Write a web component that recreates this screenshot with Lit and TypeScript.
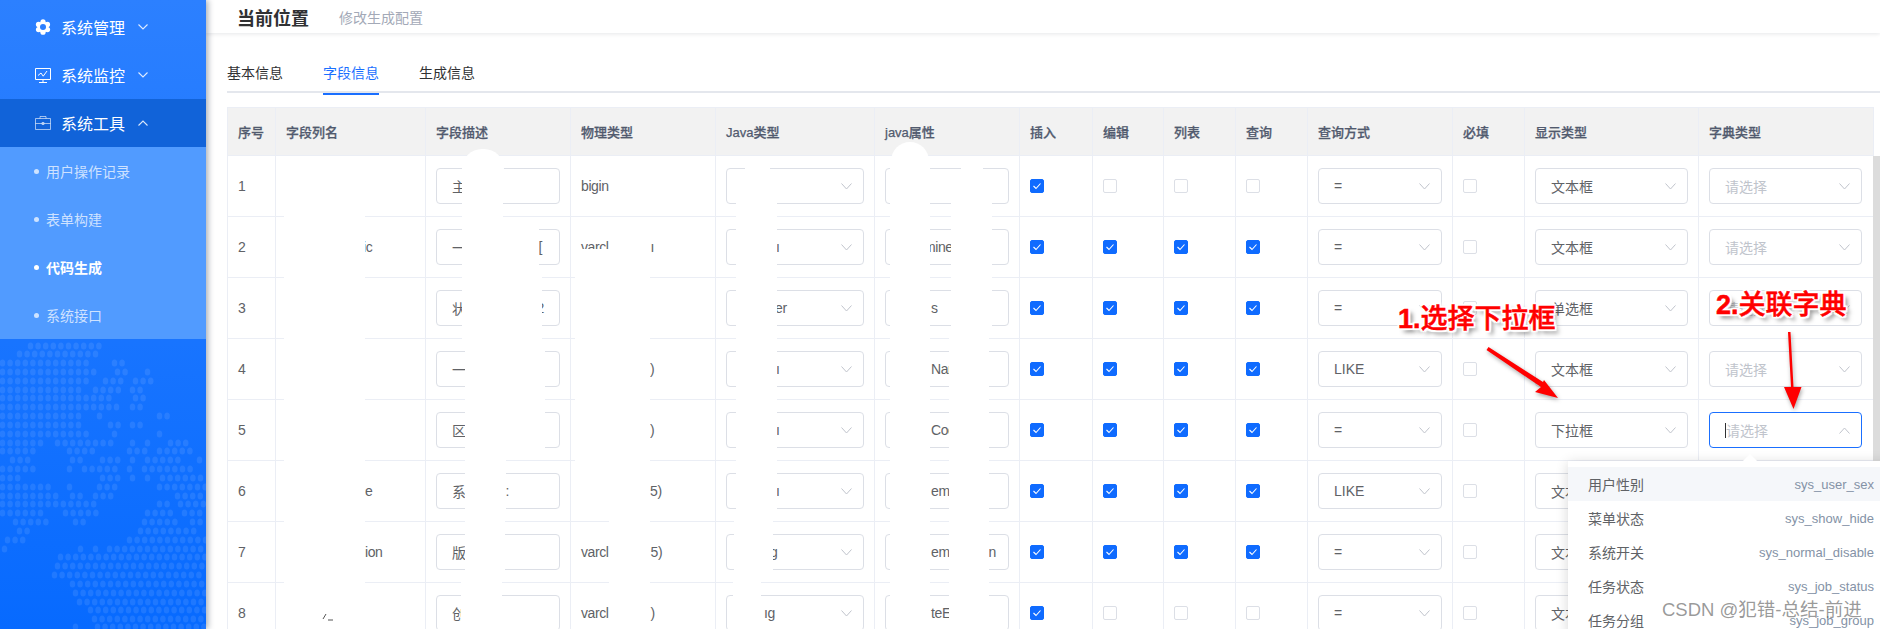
import { html, css, svg, LitElement } from "lit";
import { customElement } from "lit/decorators.js";

// a fragment list: strings are visible text, numbers are blank space (px) left by the paint-over
type Frag = (string | number)[];

interface Row {
	no: number;
	name: Frag;
	desc: Frag;
	type: Frag;
	java: Frag;
	attr: Frag;
	checks: boolean[];
	query: string;
	show: string;
}

const ALL = [true, true, true, true];
const ONLY_FIRST = [true, false, false, false];

const ROWS: Row[] = [
	{ no: 1, name: [], desc: ["主"], type: ["bigin"], java: [], attr: [], checks: ONLY_FIRST, query: "=", show: "文本框" },
	{ no: 2, name: [77, "ic"], desc: ["一", 73, "["], type: ["varcl", 42, "ı"], java: [34, "ı"], attr: [23, "mine"], checks: ALL, query: "=", show: "文本框" },
	{ no: 3, name: [], desc: ["状", 71, "2"], type: [], java: [33, "er"], attr: [30, "s"], checks: ALL, query: "=", show: "单选框" },
	{ no: 4, name: [], desc: ["一"], type: [69, ")"], java: [34, "ı"], attr: [30, "Nar"], checks: ALL, query: "LIKE", show: "文本框" },
	{ no: 5, name: [], desc: ["区"], type: [69, ")"], java: [34, "ı"], attr: [30, "Coo"], checks: ALL, query: "=", show: "下拉框" },
	{ no: 6, name: [79, "e"], desc: ["系", 40, ":"], type: [69, "5)"], java: [34, "ı"], attr: [30, "emI"], checks: ALL, query: "LIKE", show: "文本框" },
	{ no: 7, name: [79, "ion"], desc: ["版"], type: ["varcl", 42, "5)"], java: [28, "g"], attr: [30, "emV", 30, "n"], checks: ALL, query: "=", show: "文本框" },
	{ no: 8, name: [], desc: ["创"], type: ["varcl", 42, ")"], java: [22, "ıg"], attr: [30, "teE"], checks: ONLY_FIRST, query: "=", show: "文本框" },
];

const HEADERS = ["序号", "字段列名", "字段描述", "物理类型", "Java类型", "java属性", "插入", "编辑", "列表", "查询", "查询方式", "必填", "显示类型", "字典类型"];

const DICTS = [
	["用户性别", "sys_user_sex"],
	["菜单状态", "sys_show_hide"],
	["系统开关", "sys_normal_disable"],
	["任务状态", "sys_job_status"],
	["任务分组", "sys_job_group"],
];

// white paint-over blocks on the screenshot: x, y, w, h, corner radius
const PATCHES = [
	[284, 156, 81, 473, 0],
	[462, 149, 42, 40, 20],
	[462, 165, 41, 52, 0],
	[462, 217, 77, 60, 0],
	[462, 277, 80, 62, 0],
	[465, 339, 80, 121, 0],
	[465, 460, 41, 61, 0],
	[465, 521, 40, 61, 0],
	[461, 582, 41, 47, 0],
	[610, 217, 41, 32, 0],
	[575, 249, 75, 272, 0],
	[609, 521, 41, 108, 0],
	[745, 165, 25, 20, 0],
	[736, 185, 41, 336, 0],
	[734, 521, 39, 61, 0],
	[733, 582, 28, 47, 0],
	[891, 142, 38, 40, 19],
	[890, 160, 40, 469, 0],
	[961, 165, 22, 20, 0],
	[951, 185, 41, 153, 0],
	[949, 338, 40, 291, 0],
];

// runs of map dots per row of the sidebar background: y, then x start/end pairs
const MAP: number[][] = [
	[7, 28, 100],
	[15, 17, 97],
	[24, 0, 93, 112, 123],
	[33, 0, 97, 115, 127, 145, 148],
	[42, 0, 93, 103, 123, 133, 153],
	[51, 0, 82, 93, 120, 130, 142],
	[59, 0, 115, 133, 145],
	[68, 0, 118, 130, 142],
	[77, 0, 85, 97, 100, 157, 168],
	[86, 0, 82, 108, 120, 130, 142],
	[95, 0, 93, 112, 115, 157, 160],
	[104, 0, 43, 55, 118, 130, 133, 145, 148, 168, 193],
	[112, 0, 33, 67, 93, 127, 145, 157, 193],
	[121, 10, 30, 70, 82, 100, 120, 130, 133, 145, 180, 197, 203],
	[130, 0, 33, 67, 70, 82, 115, 127, 130, 142, 192],
	[139, 0, 22, 100, 118, 130, 133, 145, 148, 160, 206],
	[148, 0, 55, 67, 70, 97, 115, 157, 206],
	[157, 0, 58, 70, 82, 93, 112, 175, 206],
	[165, 0, 100, 157, 168, 178, 206],
	[174, 0, 43, 63, 97, 145, 172, 182, 206],
	[183, 13, 47, 73, 85, 142, 175, 190, 206],
	[192, 17, 28, 138, 195],
	[201, 5, 25, 127, 206],
	[210, 2, 7, 78, 82, 93, 97, 107, 206],
	[218, 58, 206],
	[227, 55, 206],
	[236, 52, 206],
	[245, 70, 206],
	[254, 73, 206],
	[263, 77, 206],
	[271, 88, 206],
	[280, 92, 206],
	[288, 73, 77, 95, 206],
];

@customElement("app-root")
export class AppRoot extends LitElement {
	static styles = css`
		:host {
			display: block;
			position: relative;
			height: 629px;
			overflow: hidden;
			background: #fff;
			color: #606266;
			font-family: "Liberation Sans", "Noto Sans CJK SC", sans-serif;
			font-size: 14px;
		}
		.page {
			display: flex;
			height: 629px;
		}

		.side {
			flex: none;
			display: flex;
			flex-direction: column;
			width: 206px;
			padding-top: 3px;
			box-sizing: border-box;
			background: linear-gradient(#2c80ff, #076aff);
			box-shadow: 2px 0 6px rgba(0, 21, 41, 0.35);
			z-index: 1;
		}
		.menu {
			display: flex;
			align-items: center;
			height: 48px;
			padding-left: 35px;
			color: #fff;
			font-size: 16px;
		}
		.menu.open {
			background: #1163d9;
		}
		.menu svg.icon {
			width: 16px;
			height: 16px;
			margin-right: 10px;
		}
		.menu svg.arrow {
			width: 10px;
			height: 6px;
			margin-left: 13px;
		}
		.subs {
			background: #519bff;
		}
		.sub {
			display: flex;
			align-items: center;
			height: 48px;
			padding-left: 34px;
			color: rgba(255, 255, 255, 0.72);
		}
		.sub::before {
			content: "";
			width: 5px;
			height: 5px;
			margin-right: 7px;
			border-radius: 50%;
			background: currentColor;
		}
		.sub.on {
			color: #fff;
			font-weight: 700;
		}
		.dots {
			display: block;
			width: 206px;
			height: 290px;
		}

		.main {
			flex: 1;
			min-width: 0;
		}
		.crumb {
			display: flex;
			align-items: center;
			gap: 30px;
			height: 33px;
			padding-left: 31px;
			box-shadow: 0 1px 4px rgba(0, 21, 41, 0.1);
		}
		.crumb b {
			color: #303133;
			font-size: 18px;
		}
		.crumb span {
			color: #a3a9b7;
		}
		.tabs {
			display: flex;
			gap: 40px;
			height: 38px;
			margin: 20px 0 14px 21px;
			border-bottom: 2px solid #e4e7ed;
			color: #303133;
			line-height: 40px;
		}
		.tabs span {
			height: 40px;
		}
		.tabs .on {
			color: #1a6fff;
			border-bottom: 2px solid #1a6fff;
		}

		.table {
			margin-left: 21px;
		}
		.row {
			display: grid;
			grid-template-columns: 48px 150px 145px 145px 159px 145px 73px 71px 72px 72px 145px 72px 174px 176px;
			width: 1647px;
			height: 61px;
			box-sizing: border-box;
			border-bottom: 1px solid #ebeef5;
		}
		.row.head {
			height: 49px;
			border-top: 1px solid #ebeef5;
			background: #f2f2f2;
			color: #515a6e;
			font-size: 13px;
			font-weight: 500;
			-webkit-text-stroke: 0.25px #515a6e;
		}
		.cell {
			display: flex;
			align-items: center;
			min-width: 0;
			padding: 0 10px;
			border-left: 1px solid #ebeef5;
			white-space: nowrap;
		}
		.cell:last-child {
			padding-right: 11px;
			border-right: 1px solid #ebeef5;
		}
		.body {
			display: flex;
		}
		.scroll {
			width: 7px;
			margin-left: -1px;
			background: #dcdcdc;
		}
		.field {
			display: flex;
			align-items: center;
			flex: 1;
			min-width: 0;
			height: 36px;
			padding: 0 11px 0 15px;
			box-sizing: border-box;
			border: 1px solid #dcdfe6;
			border-radius: 4px;
			background: #fff;
			white-space: nowrap;
		}
		.field.focus {
			border-color: #1a6fff;
		}
		.field.focus::before {
			content: "";
			width: 1px;
			height: 15px;
			background: #303133;
		}
		.field svg {
			flex: none;
			width: 11px;
			height: 7px;
			margin-left: auto;
		}
		.hint {
			color: #c0c4cc;
		}
		.frag {
			letter-spacing: -0.4px;
		}
		.gap {
			display: inline-block;
		}
		.box {
			display: flex;
			align-items: center;
			justify-content: center;
			width: 14px;
			height: 14px;
			box-sizing: border-box;
			border: 1px solid #dcdfe6;
			border-radius: 2px;
		}
		.box.on {
			border-color: #0f6bff;
			background: #0f6bff;
		}
		.box svg {
			width: 10px;
			height: 8px;
		}

		.over {
			position: absolute;
			left: 0;
			top: 0;
			width: 1880px;
			height: 629px;
			pointer-events: none;
		}
		.over.marks {
			filter: drop-shadow(1px 2px 2px rgba(0, 0, 0, 0.35));
		}
		.drop {
			position: absolute;
			left: 1568px;
			top: 461px;
			width: 330px;
			padding: 6px 24px 0 0;
			box-sizing: border-box;
			background: #fff;
			box-shadow: 0 2px 12px rgba(0, 0, 0, 0.16);
		}
		.drop::before {
			content: "";
			position: absolute;
			left: 177px;
			top: -5px;
			width: 10px;
			height: 10px;
			background: #fff;
			transform: rotate(45deg);
		}
		.opt {
			position: relative;
			display: flex;
			justify-content: space-between;
			align-items: center;
			height: 34px;
			padding: 0 0 0 20px;
		}
		.opt:first-child {
			background: #f5f7fa;
			margin-right: -24px;
			padding-right: 24px;
		}
		.opt small {
			color: #8492a6;
			font-size: 13px;
		}
		.note {
			position: absolute;
			color: #f00;
			font-size: 27px;
			font-weight: 500;
			-webkit-text-stroke: 0.5px #f00;
			line-height: 34px;
			white-space: nowrap;
			text-shadow: 2px 0 #fff, -2px 0 #fff, 0 2px #fff, 0 -2px #fff, 2px 2px 1px #fff, -2px -2px 1px #fff, 2px -2px 1px #fff, -2px 2px 1px #fff, 4px 4px 4px rgba(0, 0, 0, 0.5);
		}
		.note b {
			font-weight: 700;
		}
		.note.one {
			left: 1398px;
			top: 302px;
		}
		.note.two {
			left: 1716px;
			top: 288px;
		}
		.mark {
			position: absolute;
			left: 1662px;
			top: 598px;
			color: rgba(85, 85, 85, 0.6);
			font-size: 18.5px;
			line-height: 24px;
			white-space: nowrap;
		}
	`;

	frags(list: Frag) {
		return list.map((f) => (typeof f === "number" ? html`<span class="gap" style="width:${f}px"></span>` : html`<span class="frag">${f}</span>`));
	}

	chevron(up = false) {
		return html`<svg viewBox="0 0 11 7" fill="none" stroke="#c0c4cc" stroke-width="1">
			<path d=${up ? "M.5 6.5 5.5 1l5 5.5" : "M.5.5 5.5 6l5-5.5"}></path>
		</svg>`;
	}

	check(on: boolean) {
		return html`<div class="cell">
			<span class="box ${on ? "on" : ""}">
				${on ? html`<svg viewBox="0 0 10 8" fill="none" stroke="#fff" stroke-width="1.1"><path d="M1.5 4 4 6.5 8.5 1.5"></path></svg>` : ""}
			</span>
		</div>`;
	}

	renderRow(r: Row) {
		const focus = r.no === 5;
		return html`<div class="row">
			<div class="cell">${r.no}</div>
			<div class="cell">${this.frags(r.name)}</div>
			<div class="cell"><div class="field">${this.frags(r.desc)}</div></div>
			<div class="cell">${this.frags(r.type)}</div>
			<div class="cell"><div class="field">${this.frags(r.java)}${this.chevron()}</div></div>
			<div class="cell"><div class="field">${this.frags(r.attr)}</div></div>
			${r.checks.map((c) => this.check(c))}
			<div class="cell"><div class="field">${r.query}${this.chevron()}</div></div>
			${this.check(false)}
			<div class="cell"><div class="field">${r.show}${this.chevron()}</div></div>
			<div class="cell">
				<div class="field ${focus ? "focus" : ""}"><span class="hint">请选择</span>${this.chevron(focus)}</div>
			</div>
		</div>`;
	}

	renderSide() {
		const arrow = (up: boolean) => html`<svg class="arrow" viewBox="0 0 10 6" fill="none" stroke="#fff" stroke-opacity=".85" stroke-width="1.1">
			<path d=${up ? "M.5 5.5 5 1l4.5 4.5" : "M.5.5 5 5 9.5.5"}></path>
		</svg>`;
		return html`<nav class="side">
			<div class="menu">
				<svg class="icon" viewBox="0 0 16 16" fill="#fff">
					<circle cx="8" cy="8" r="5.5"></circle>
					<circle cx="8" cy="2.8" r="2.6"></circle>
					<circle cx="8" cy="13.2" r="2.6"></circle>
					<circle cx="3.5" cy="5.4" r="2.6"></circle>
					<circle cx="12.5" cy="5.4" r="2.6"></circle>
					<circle cx="3.5" cy="10.6" r="2.6"></circle>
					<circle cx="12.5" cy="10.6" r="2.6"></circle>
					<circle cx="8" cy="8" r="3" fill="#2b7fff"></circle>
				</svg>
				系统管理${arrow(false)}
			</div>
			<div class="menu">
				<svg class="icon" viewBox="0 0 16 16" fill="none" stroke="#fff" stroke-width="1">
					<path d="M.5 1.5h15v11H.5zM8 12.5v3M4 15.5h8"></path>
					<path d="M3 8.5 6 6l2.2 3.2L12 4"></path>
				</svg>
				系统监控${arrow(false)}
			</div>
			<div class="menu open">
				<svg class="icon" viewBox="0 0 16 16" fill="none" stroke="#fff" stroke-opacity=".6" stroke-width="1">
					<path d="M.5 3.5h15v11H.5zM5 3.5v-2h6v2M.5 8.5h15M7 7.5h2v2H7z"></path>
				</svg>
				系统工具${arrow(true)}
			</div>
			<div class="subs">
				<div class="sub">用户操作记录</div>
				<div class="sub">表单构建</div>
				<div class="sub on">代码生成</div>
				<div class="sub">系统接口</div>
			</div>
			<svg class="dots" viewBox="0 0 206 290" fill="#fff" fill-opacity=".09">
				${MAP.map(([y, ...runs]) => {
					const dots = [];
					for (let i = 0; i < runs.length; i += 2) {
						for (let x = runs[i] + 2.5; x < runs[i + 1]; x += 7.6) {
							dots.push(svg`<ellipse cx=${x} cy=${y} rx="2.8" ry="3.5"></ellipse>`);
						}
					}
					return dots;
				})}
			</svg>
		</nav>`;
	}

	render() {
		return html`<div class="page">
				${this.renderSide()}
				<main class="main">
					<div class="crumb"><b>当前位置</b><span>修改生成配置</span></div>
					<div class="tabs"><span>基本信息</span><span class="on">字段信息</span><span>生成信息</span></div>
					<div class="table">
						<div class="row head">${HEADERS.map((h) => html`<div class="cell">${h}</div>`)}</div>
						<div class="body">
							<div>${ROWS.map((r) => this.renderRow(r))}</div>
							<div class="scroll"></div>
						</div>
					</div>
				</main>
			</div>

			<svg class="over" viewBox="0 0 1880 629">
				${PATCHES.map(([x, y, w, h, rx]) => svg`<rect x=${x} y=${y} width=${w} height=${h} rx=${rx} fill="#fff"></rect>`)}
				<path d="M323 619l3-5M328 620h5" fill="none" stroke="#555" stroke-width="1"></path>
			</svg>

			<div class="drop">
				${DICTS.map(([label, key]) => html`<div class="opt"><span>${label}</span><small>${key}</small></div>`)}
			</div>

			<svg class="over marks" viewBox="0 0 1880 629" fill="#f00">
				<path d="M1486.5 350 1488.5 347 1543 382 1544 380 1558 398 1535 392 1541 387z"></path>
				<path d="M1788 332h2.5l3 55 8 0-8 22-9.5-22 7 0z"></path>
			</svg>

			<span class="note one"><b>1.</b>选择下拉框</span>
			<span class="note two"><b>2.</b>关联字典</span>
			<span class="mark">CSDN @犯错-总结-前进</span>`;
	}
}
